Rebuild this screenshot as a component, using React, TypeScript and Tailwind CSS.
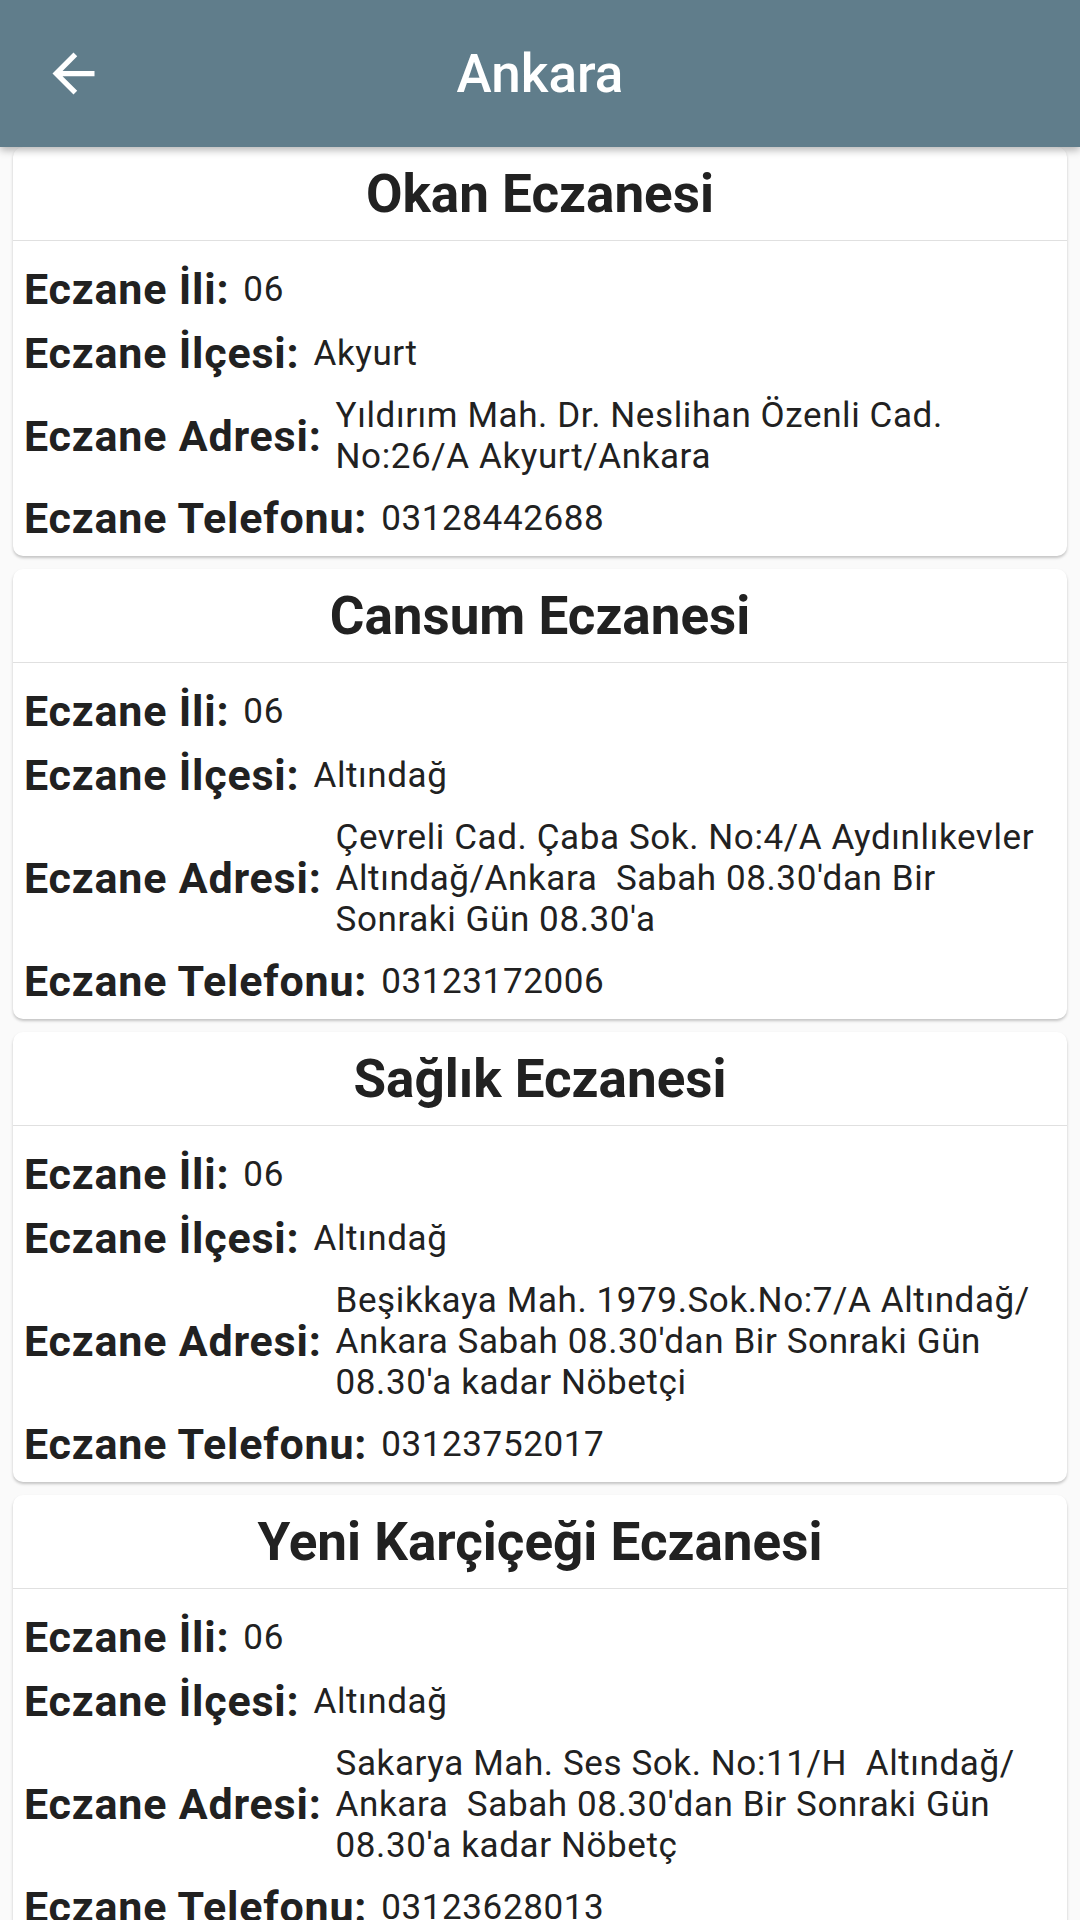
import React from 'react';

interface Pharmacy {
  name: string;
  city: string;
  district: string;
  address: string[];
  phone: string;
}

const pharmacies: Pharmacy[] = [
  {
    name: 'Okan Eczanesi',
    city: '06',
    district: 'Akyurt',
    address: ['Yıldırım Mah. Dr. Neslihan Özenli Cad.', 'No:26/A Akyurt/Ankara'],
    phone: '03128442688',
  },
  {
    name: 'Cansum Eczanesi',
    city: '06',
    district: 'Altındağ',
    address: [
      'Çevreli Cad. Çaba Sok. No:4/A Aydınlıkevler',
      "Altındağ/Ankara  Sabah 08.30'dan Bir",
      "Sonraki Gün 08.30'a",
    ],
    phone: '03123172006',
  },
  {
    name: 'Sağlık Eczanesi',
    city: '06',
    district: 'Altındağ',
    address: [
      'Beşikkaya Mah. 1979.Sok.No:7/A Altındağ/',
      "Ankara Sabah 08.30'dan Bir Sonraki Gün",
      "08.30'a kadar Nöbetçi",
    ],
    phone: '03123752017',
  },
  {
    name: 'Yeni Karçiçeği Eczanesi',
    city: '06',
    district: 'Altındağ',
    address: [
      'Sakarya Mah. Ses Sok. No:11/H  Altındağ/',
      "Ankara  Sabah 08.30'dan Bir Sonraki Gün",
      "08.30'a kadar Nöbetç",
    ],
    phone: '03123628013',
  },
];

const Row: React.FC<{ label: string; children: React.ReactNode }> = ({ label, children }) => (
  <div className="flex items-center gap-[14px]">
    <span className="shrink-0 whitespace-nowrap text-[43px] font-bold leading-[49px] tracking-[0.8px] text-[#212121]">
      {label}
    </span>
    <div className="text-[35px] leading-[41px] tracking-[0.6px] text-[#212121]">{children}</div>
  </div>
);

const PharmacyCard: React.FC<{ item: Pharmacy }> = ({ item }) => (
  <div className="rounded-[10px] bg-white shadow-[0_2px_3px_rgba(0,0,0,0.22)]">
    <div className="flex h-[94px] items-center justify-center border-b border-[#e0e0e0]">
      <h2 className="text-[53px] font-bold leading-[62px] text-[#212121]">{item.name}</h2>
    </div>
    <div className="flex flex-col gap-[15px] pb-[13px] pl-[11px] pr-[13px] pt-[24px]">
      <Row label="Eczane İli:">{item.city}</Row>
      <Row label="Eczane İlçesi:">{item.district}</Row>
      <Row label="Eczane Adresi:">
        <div className="py-[2px]">
          {item.address.map((line) => (
            <span key={line} className="block whitespace-pre">
              {line}
            </span>
          ))}
        </div>
      </Row>
      <Row label="Eczane Telefonu:">{item.phone}</Row>
    </div>
  </div>
);

export default function App() {
  return (
    <div className="h-[1920px] w-[1080px] overflow-hidden bg-[#fafafa] font-['Roboto','Noto_Sans',sans-serif]">
      <header className="relative z-10 grid h-[147px] grid-cols-[147px_1fr_147px] items-center bg-[#607d8b] shadow-[0_3px_8px_rgba(0,0,0,0.3)]">
        <div className="flex items-center justify-center">
          <svg width="63" height="63" viewBox="0 0 24 24" fill="#ffffff">
            <path d="M20 11H7.83l5.59-5.59L12 4l-8 8 8 8 1.41-1.41L7.83 13H20v-2z" />
          </svg>
        </div>
        <h1 className="text-center text-[53px] font-medium leading-[62px] text-white">Ankara</h1>
        <div />
      </header>
      <main className="flex flex-col gap-[13px] px-[13px]">
        {pharmacies.map((p) => (
          <PharmacyCard key={p.name} item={p} />
        ))}
      </main>
    </div>
  );
}
